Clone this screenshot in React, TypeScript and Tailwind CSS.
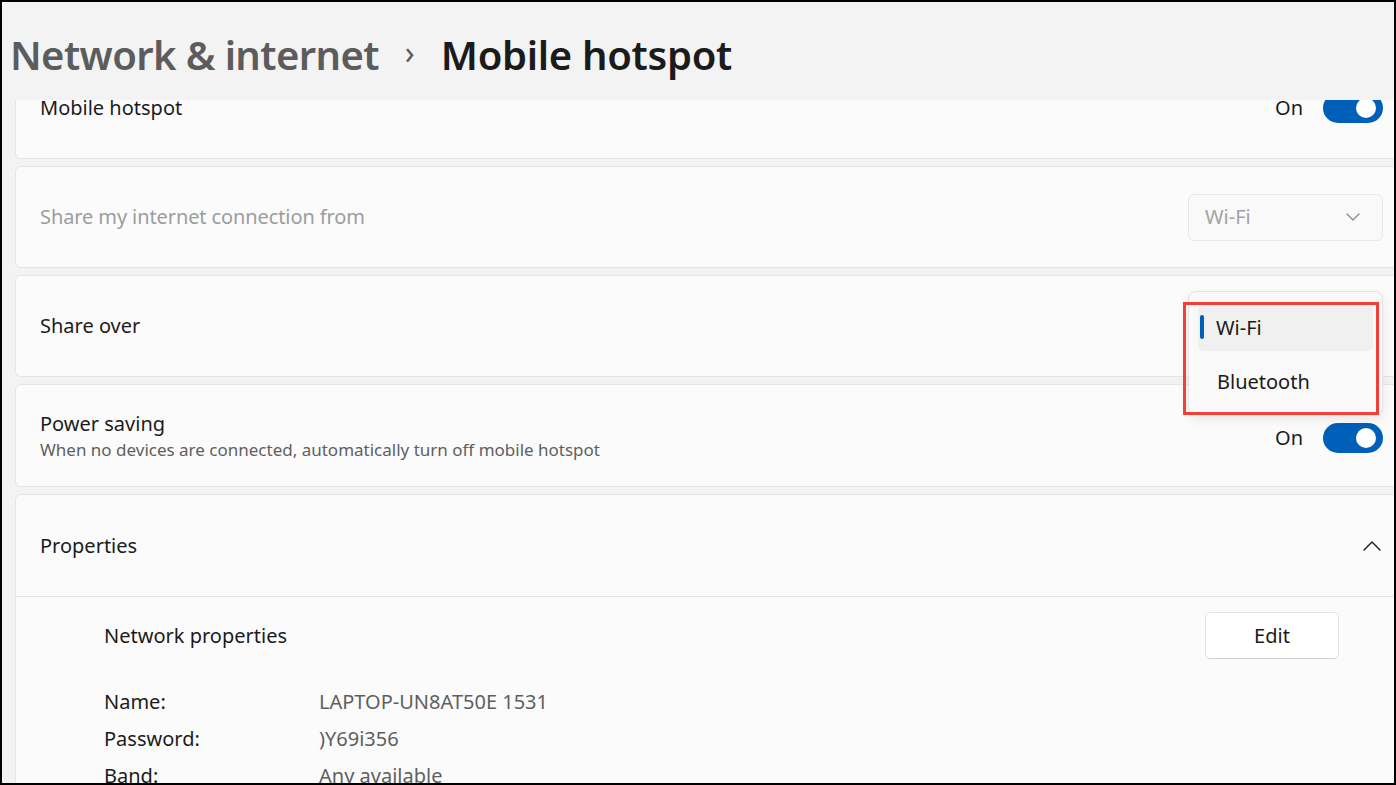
import React from "react";

const font = { fontFamily: '"Noto Sans", "Open Sans", sans-serif' };

function Toggle({ tight = false }: { tight?: boolean }) {
  return (
    <div className="flex items-center gap-[20px]">
      <span className={tight ? "text-[20px] leading-[20px] text-[#1b1b1b]" : "text-[20px] text-[#1b1b1b]"}>On</span>
      <div className="w-[60px] h-[30px] rounded-full bg-[#005fb8] flex items-center justify-end pr-[7px]">
        <div className="w-[20px] h-[20px] rounded-full bg-white" />
      </div>
    </div>
  );
}

function ChevronDown({ color = "#8a8a8a" }: { color?: string }) {
  return (
    <svg width="14" height="8" viewBox="0 0 14 8" fill="none">
      <path d="M1 1L7 7L13 1" stroke={color} strokeWidth="1.3" strokeLinecap="round" strokeLinejoin="round" />
    </svg>
  );
}

function ChevronUp() {
  return (
    <svg width="18" height="10" viewBox="0 0 18 10" fill="none">
      <path d="M1 9L9 1L17 9" stroke="#1b1b1b" strokeWidth="1.4" strokeLinecap="round" strokeLinejoin="round" />
    </svg>
  );
}

export default function App() {
  return (
    <div className="w-[1396px] h-[785px] bg-black p-[2px]" style={font}>
      <div className="w-full h-full bg-[#f3f3f3] flex flex-col overflow-hidden relative">
        <div className="h-[98px] shrink-0 flex items-center pl-[8px] pt-[8px] relative z-20 bg-[#f3f3f3]">
          <span className="text-[40px] font-semibold text-[#5c5c5c] tracking-[-0.6px]">Network &amp; internet</span>
          <span className="text-[32px] text-[#5c5c5c] ml-[26px] mr-[26px] mb-[6px]">›</span>
          <span className="text-[40px] font-semibold text-[#1b1b1b] tracking-[-0.3px]">Mobile hotspot</span>
        </div>
        <div className="flex-1 overflow-hidden relative">
          <div className="-mt-[43px] ml-[13px] w-[1393px] flex flex-col gap-[7px]">
            <div className="h-[102px] rounded-[6px] border border-[#e5e5e5] bg-[#fbfbfb] flex items-center justify-between px-[24px]">
              <span className="text-[20px] leading-[20px] text-[#1b1b1b]">Mobile hotspot</span>
              <Toggle tight />
            </div>
            <div className="h-[102px] rounded-[6px] border border-[#e5e5e5] bg-[#fbfbfb] flex items-center justify-between px-[24px]">
              <span className="text-[20px] text-[#9d9d9d] tracking-[-0.1px]">Share my internet connection from</span>
              <div className="w-[195px] h-[47px] rounded-[6px] border-[1.5px] border-[#e8e8e8] bg-[#f9f9f9] flex items-center justify-between pl-[16px] pr-[22px]">
                <span className="text-[20px] text-[#a3a3a3]">Wi-Fi</span>
                <ChevronDown />
              </div>
            </div>
            <div className="h-[102px] rounded-[6px] border border-[#e5e5e5] bg-[#fbfbfb] flex items-center justify-between px-[24px] relative z-10">
              <span className="text-[20px] text-[#1b1b1b]">Share over</span>
              <div className="absolute right-[24px] top-[15px] w-[195px] h-[125px] rounded-[8px] border border-[#e3e3e3] bg-[#f9f9f9] shadow-[0_4px_12px_rgba(0,0,0,0.08)] flex flex-col px-[9px] pt-[12px]">
                <div className="h-[47px] rounded-[5px] bg-[#f0f0f0] flex items-center relative pl-[18px]">
                  <div className="absolute left-[2px] top-[11px] w-[4px] h-[24px] rounded-full bg-[#005fb8]" />
                  <span className="text-[20px] text-[#1b1b1b]">Wi-Fi</span>
                </div>
                <div className="h-[62px] flex items-center pl-[19px]">
                  <span className="text-[20px] text-[#1b1b1b]">Bluetooth</span>
                </div>
              </div>
              <div className="absolute right-[28px] top-[26px] w-[196px] h-[113px] border-[3px] border-[#ef4136]" />
            </div>
            <div className="h-[103px] rounded-[6px] border border-[#e5e5e5] bg-[#fbfbfb] flex items-center justify-between px-[24px]">
              <div className="flex flex-col">
                <span className="text-[20px] text-[#1b1b1b] leading-[28px]">Power saving</span>
                <span className="text-[17px] text-[#5f5f5f] leading-[24px]">When no devices are connected, automatically turn off mobile hotspot</span>
              </div>
              <div className="mt-[5px]">
                <Toggle />
              </div>
            </div>
            <div className="rounded-[6px] border border-[#e5e5e5] bg-[#fbfbfb] flex flex-col h-[400px]">
              <div className="h-[102px] flex items-center justify-between px-[24px] pr-[26px] border-b border-[#e5e5e5]">
                <span className="text-[20px] text-[#1b1b1b]">Properties</span>
                <ChevronUp />
              </div>
              <div className="pl-[88px] pr-[68px] pt-[15px] flex flex-col">
                <div className="h-[47px] flex items-center justify-between">
                  <span className="text-[20px] text-[#1b1b1b]">Network properties</span>
                  <div className="w-[134px] h-[47px] rounded-[5px] border border-[#e5e5e5] border-b-[#d0d0d0] bg-white flex items-center justify-center">
                    <span className="text-[20px] text-[#1b1b1b]">Edit</span>
                  </div>
                </div>
                <div className="mt-[24px] flex flex-col">
                  {[
                    ["Name:", "LAPTOP-UN8AT50E 1531"],
                    ["Password:", ")Y69i356"],
                    ["Band:", "Any available"],
                  ].map(([k, v]) => (
                    <div key={k} className="h-[37px] flex items-center">
                      <span className="w-[215px] text-[20px] text-[#1b1b1b]">{k}</span>
                      <span className="text-[20px] text-[#5f5f5f]">{v}</span>
                    </div>
                  ))}
                </div>
              </div>
            </div>
          </div>
        </div>
      </div>
    </div>
  );
}
